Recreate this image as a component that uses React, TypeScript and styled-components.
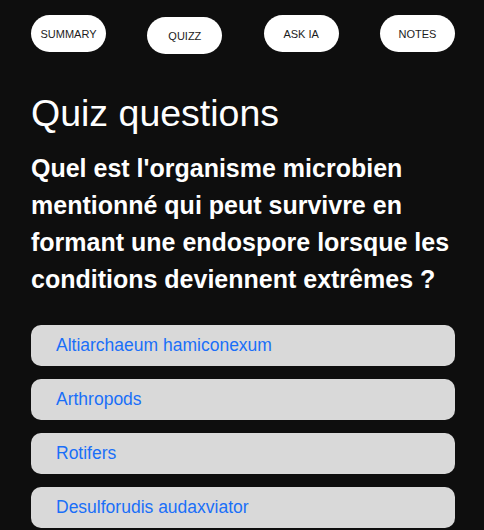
import styled, { createGlobalStyle } from 'styled-components';

const GlobalStyle = createGlobalStyle`
  html, body {
    margin: 0;
    padding: 0;
    background: #0e0e0e;
  }
  body {
    font-family: 'Liberation Sans', Arial, sans-serif;
  }
`;

const tabs = [
  { label: 'SUMMARY', active: false },
  { label: 'QUIZZ', active: true },
  { label: 'ASK IA', active: false },
  { label: 'NOTES', active: false },
];

const answers = [
  'Altiarchaeum hamiconexum',
  'Arthropods',
  'Rotifers',
  'Desulforudis audaxviator',
];

function App() {
  return (
    <>
      <GlobalStyle />
      <StyledPage>
        <StyledTabs>
          {tabs.map((tab) => (
            <StyledTab key={tab.label} $active={tab.active}>
              {tab.label}
            </StyledTab>
          ))}
        </StyledTabs>

        <StyledTitle>Quiz questions</StyledTitle>
        <StyledQuestion>
          Quel est l'organisme microbien mentionné qui peut survivre en formant une
          endospore lorsque les conditions deviennent extrêmes ?
        </StyledQuestion>

        <StyledAnswers>
          {answers.map((answer) => (
            <StyledAnswer key={answer}>{answer}</StyledAnswer>
          ))}
        </StyledAnswers>
      </StyledPage>
    </>
  );
}

export default App;

const StyledPage = styled.div`
  display: flex;
  flex-direction: column;
  width: 424px;
  padding: 15px 29px 0 31px;
  color: #fff;
`;

const StyledTabs = styled.div`
  display: flex;
  justify-content: space-between;
  align-items: flex-start;
`;

const StyledTab = styled.button.attrs({ type: 'button' })<{ $active: boolean }>`
  width: 75px;
  height: 37px;
  margin-top: ${({ $active }) => ($active ? '2px' : '0')};
  border: none;
  border-radius: 19px;
  background: #fff;
  color: #1c1c1c;
  font-family: 'Liberation Sans', Arial, sans-serif;
  font-size: 11px;
  padding: 0;
  cursor: pointer;
`;

const StyledTitle = styled.h1`
  margin: 38px 0 0;
  font-size: 37.5px;
  font-weight: 400;
  line-height: 42px;
`;

const StyledQuestion = styled.p`
  margin: 16px 0 0;
  font-size: 25px;
  font-weight: 700;
  line-height: 37px;
`;

const StyledAnswers = styled.div`
  display: flex;
  flex-direction: column;
  gap: 13px;
  margin-top: 27px;
`;

const StyledAnswer = styled.div`
  display: flex;
  align-items: center;
  height: 41px;
  padding: 0 25px;
  border-radius: 10px;
  background: #d9d9d9;
  color: #1a6ff8;
  font-size: 17.5px;
`;
